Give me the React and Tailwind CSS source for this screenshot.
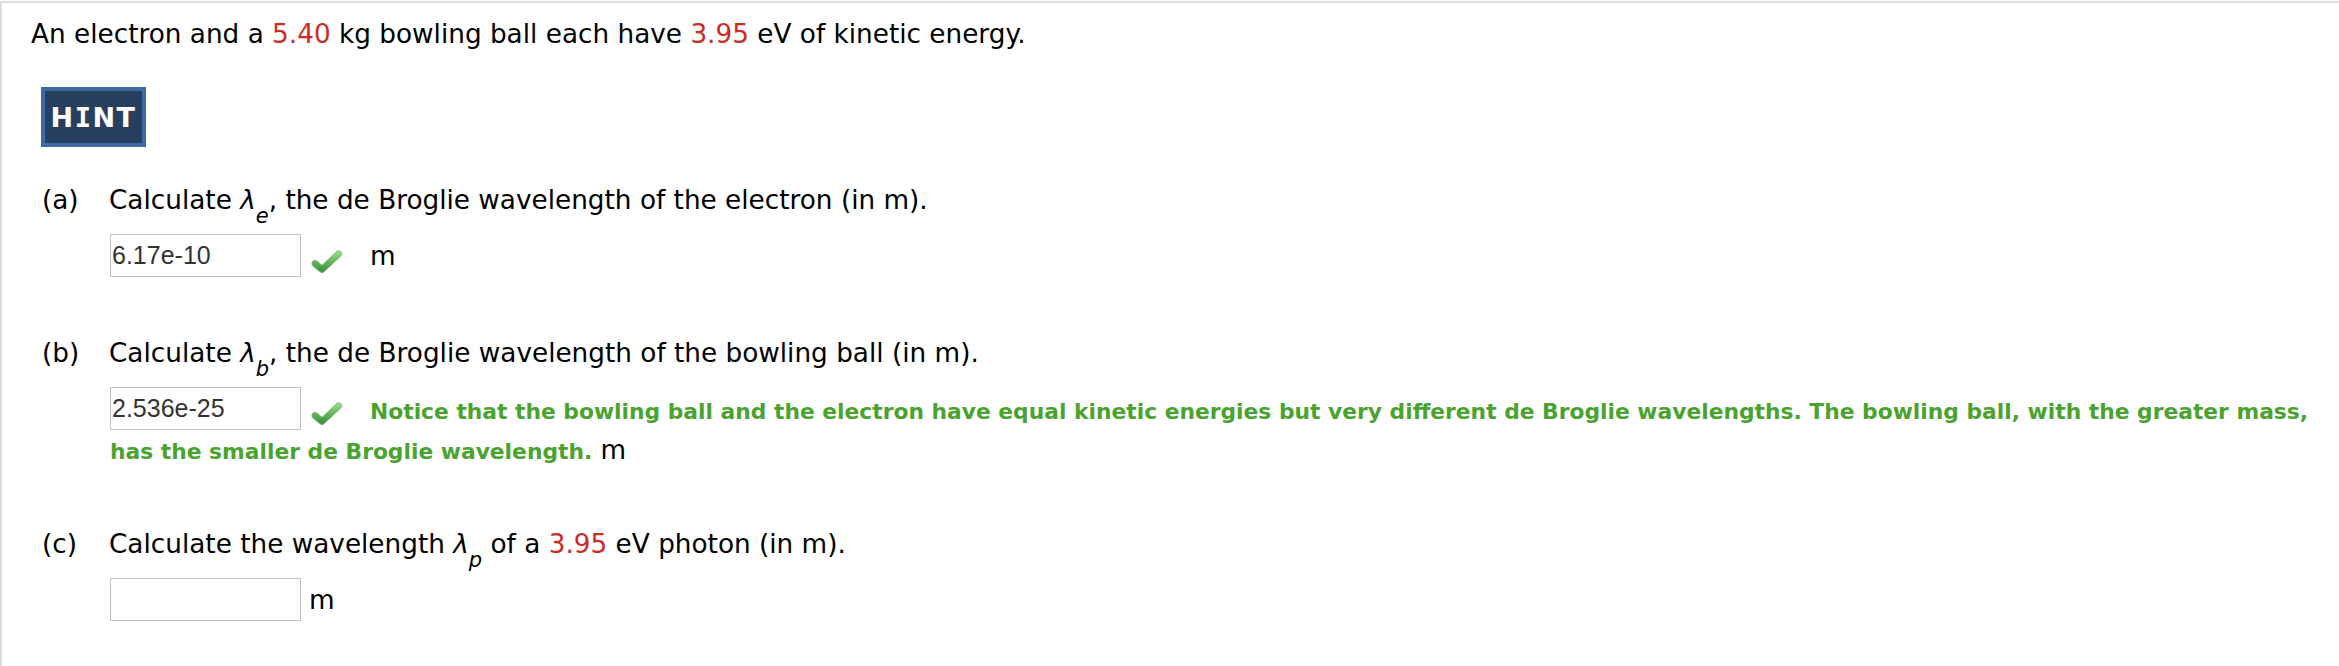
function Check({ className = "" }) {
  return (
    <svg className={className} width="32" height="25" viewBox="0 0 32 25" aria-hidden="true">
      <defs>
        <linearGradient id="chk" x1="0" y1="0" x2="0" y2="1">
          <stop offset="0" stopColor="#8fd482" />
          <stop offset="0.5" stopColor="#62b45a" />
          <stop offset="1" stopColor="#449a40" />
        </linearGradient>
      </defs>
      <polyline
        points="4,14.5 11,20.5 27.5,5"
        fill="none"
        stroke="#6f9f6b"
        strokeWidth="7"
        strokeLinecap="round"
        strokeLinejoin="round"
        opacity="0.75"
      />
      <polyline
        points="4,14.5 11,20.5 27.5,5"
        fill="none"
        stroke="url(#chk)"
        strokeWidth="5.6"
        strokeLinecap="round"
        strokeLinejoin="round"
      />
    </svg>
  );
}

function Red({ children }) {
  return <span className="text-[#cd2b24]">{children}</span>;
}

function Lambda({ sub }) {
  return (
    <>
      <i>λ</i>
      <sub className="text-[21px] leading-none align-[-9px]">
        <i>{sub}</i>
      </sub>
    </>
  );
}

function Answer({ value }) {
  return (
    <input
      readOnly
      value={value}
      className="w-[191px] h-[43px] shrink-0 border border-[#bfbfbf] bg-white pl-[1px] font-['Liberation_Sans',Arial,sans-serif] text-[25px] text-[#333333] outline-none"
    />
  );
}

export default function App() {
  return (
    <div className="w-[2339px] h-[666px] bg-white pt-[1px] overflow-hidden">
      <div className="h-full border-t-2 border-l-2 border-[#dddddd] pl-[29px] pt-[15px] font-['DejaVu_Sans',Verdana,sans-serif] text-[26.3px] leading-[32px] text-black">
        <p className="h-[32px] whitespace-nowrap">
          An electron and a <Red>5.40</Red> kg bowling ball each have <Red>3.95</Red> eV of kinetic energy.
        </p>

        <div className="mt-[37px] ml-[10px] w-[105px] h-[60px] border-4 border-[#3e6aa3] bg-[#284060] flex items-center justify-center text-white font-bold text-[27px] leading-none tracking-[1.5px]">
          <span>H</span>
          <span className="font-['DejaVu_Sans_Mono',monospace]">I</span>
          <span>NT</span>
        </div>

        {/* (a) */}
        <div className="mt-[37px] ml-[11px]">
          <div className="flex h-[32px] whitespace-nowrap">
            <span className="w-[67px] shrink-0">(a)</span>
            <span>
              Calculate <Lambda sub="e" />, the de Broglie wavelength of the electron (in m).
            </span>
          </div>
          <div className="mt-[18px] ml-[68px] flex items-start h-[43px]">
            <Answer value="6.17e-10" />
            <Check className="ml-[10px] mt-[15px] shrink-0" />
            <span className="ml-[27px] self-center">m</span>
          </div>
        </div>

        {/* (b) */}
        <div className="mt-[60px] ml-[11px]">
          <div className="flex h-[32px] whitespace-nowrap">
            <span className="w-[67px] shrink-0">(b)</span>
            <span>
              Calculate <Lambda sub="b" />, the de Broglie wavelength of the bowling ball (in m).
            </span>
          </div>
          <div className="mt-[18px] ml-[68px]">
            <div className="flex items-start">
              <Answer value="2.536e-25" />
              <Check className="ml-[10px] mt-[14px] shrink-0" />
              <span className="ml-[27px] mt-[10px] text-[21.8px] leading-[30px] font-bold text-[#4aa32f] whitespace-nowrap">
                Notice that the bowling ball and the electron have equal kinetic energies but very different de Broglie wavelengths. The bowling ball, with the greater mass,
              </span>
            </div>
            <div className="mt-[4px] whitespace-nowrap">
              <span className="text-[21.8px] font-bold text-[#4aa32f]">has the smaller de Broglie wavelength.</span> m
            </div>
          </div>
        </div>

        {/* (c) */}
        <div className="mt-[60px] ml-[11px]">
          <div className="flex h-[32px] whitespace-nowrap">
            <span className="w-[67px] shrink-0">(c)</span>
            <span>
              Calculate the wavelength <Lambda sub="p" /> of a <Red>3.95</Red> eV photon (in m).
            </span>
          </div>
          <div className="mt-[18px] ml-[68px] flex items-start h-[43px]">
            <Answer value="" />
            <span className="ml-[8px] self-center">m</span>
          </div>
        </div>
      </div>
    </div>
  );
}
